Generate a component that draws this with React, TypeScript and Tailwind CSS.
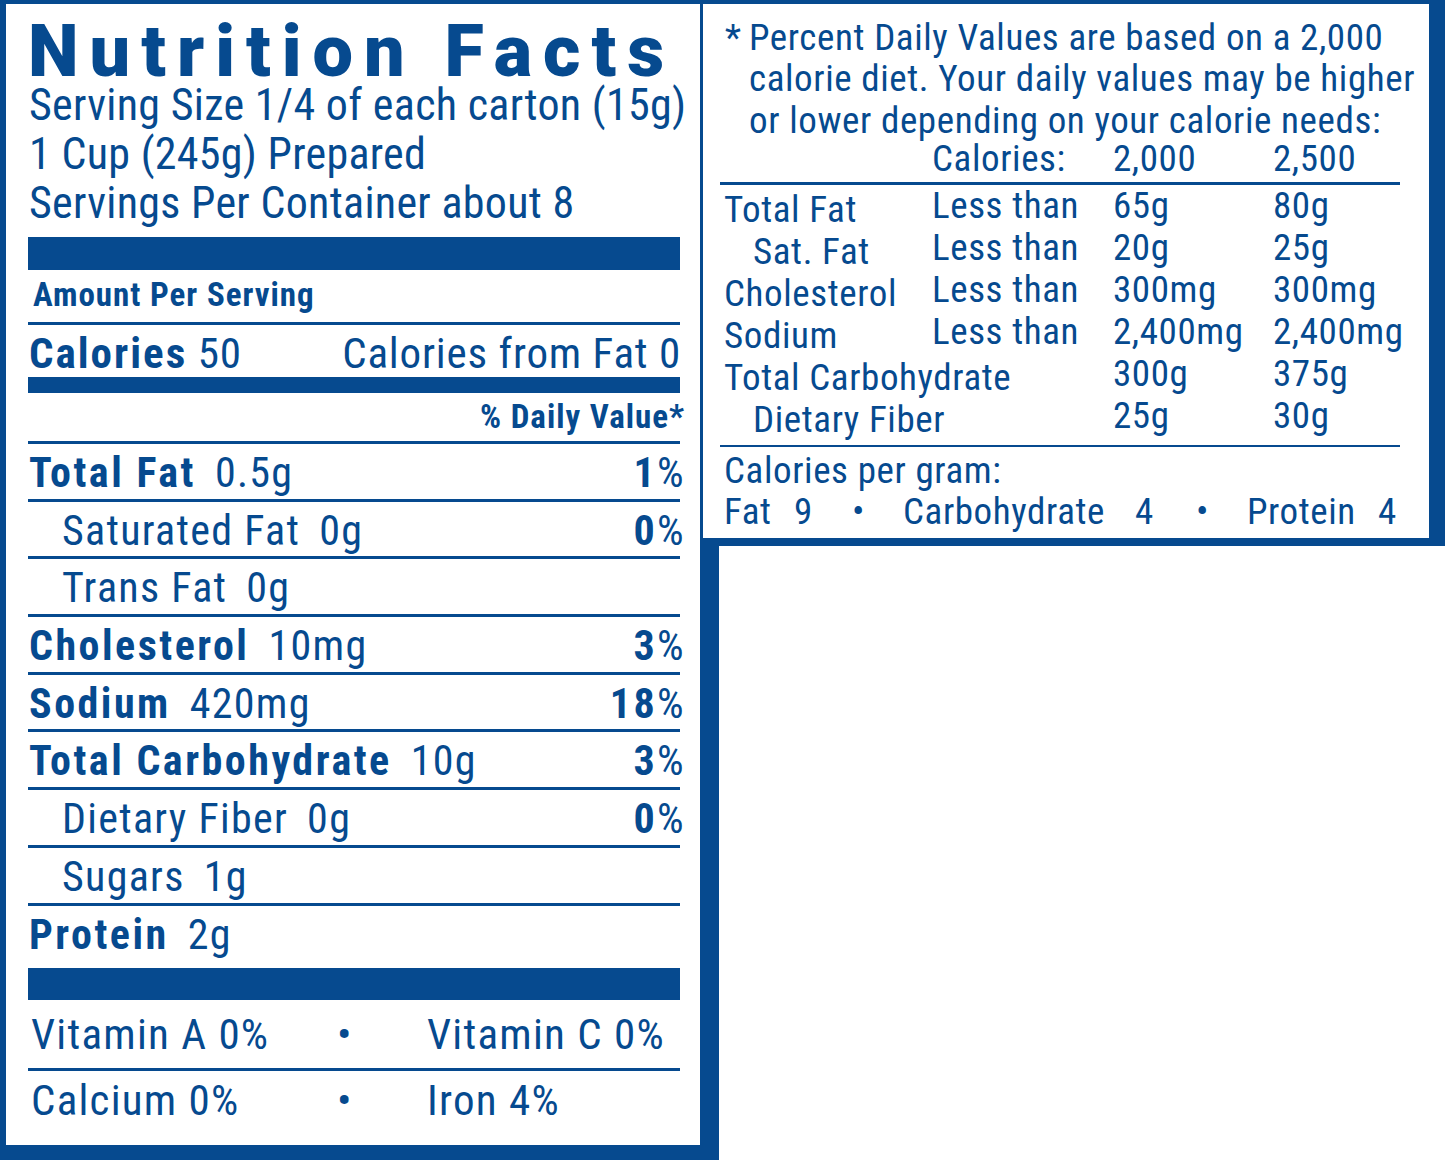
const Line = () => <div className="h-[3px] bg-[#064a8f]" />;

type Row = { name: string; amount: string; dv?: string; bold: boolean; indent?: boolean };

const rows: Row[] = [
  { name: 'Total Fat', amount: '0.5g', dv: '1', bold: true },
  { name: 'Saturated Fat', amount: '0g', dv: '0', bold: false, indent: true },
  { name: 'Trans Fat', amount: '0g', bold: false, indent: true },
  { name: 'Cholesterol', amount: '10mg', dv: '3', bold: true },
  { name: 'Sodium', amount: '420mg', dv: '18', bold: true },
  { name: 'Total Carbohydrate', amount: '10g', dv: '3', bold: true },
  { name: 'Dietary Fiber', amount: '0g', dv: '0', bold: false, indent: true },
  { name: 'Sugars', amount: '1g', bold: false, indent: true },
];

function NutrientRow({ r }: { r: Row }) {
  return (
    <div className="flex h-[54.7px] items-start justify-between whitespace-nowrap pt-[3px] text-[42px] leading-[52px] tracking-[1.3px]">
      <div className={r.indent ? 'pl-[34px]' : 'pl-[1px]'}>
        <span className={r.bold ? 'font-bold tracking-[2.5px]' : ''}>{r.name}</span>
        <span className="ml-[19px]">{r.amount}</span>
      </div>
      {r.dv && (
        <div className="-mr-[5px]">
          <span className="font-bold tracking-[2.5px]">{r.dv}</span>%
        </div>
      )}
    </div>
  );
}

const table = [
  { label: 'Total Fat', sub: false, lt: 'Less than', a: '65g', b: '80g' },
  { label: 'Sat. Fat', sub: true, lt: 'Less than', a: '20g', b: '25g' },
  { label: 'Cholesterol', sub: false, lt: 'Less than', a: '300mg', b: '300mg' },
  { label: 'Sodium', sub: false, lt: 'Less than', a: '2,400mg', b: '2,400mg' },
  { label: 'Total Carbohydrate', sub: false, lt: '', a: '300g', b: '375g' },
  { label: 'Dietary Fiber', sub: true, lt: '', a: '25g', b: '30g' },
];

export default function App() {
  return (
    <div className="flex items-start bg-white text-[#064a8f] font-['Roboto_Condensed','Liberation_Sans',sans-serif]">
      {/* Left panel */}
      <div className="box-border h-[1160px] w-[719px] shrink-0 border-t-[4px] border-l-[6px] border-r-[19px] border-b-[15px] border-[#064a8f] bg-white pl-[22px] pr-[20px] pt-[19px]">
        <div className="h-[58px] whitespace-nowrap font-['Roboto','Liberation_Sans',sans-serif] text-[72px] font-black leading-[58px] tracking-[11px]">
          Nutrition Facts
        </div>
        <div className="whitespace-nowrap pl-[1px] text-[44px] leading-[49px] tracking-[0.3px]">
          <div>Serving Size 1/4 of each carton (15g)</div>
          <div>1 Cup (245g) Prepared</div>
          <div>Servings Per Container about 8</div>
        </div>
        <div className="mt-[9px] h-[33px] bg-[#064a8f]" />
        <div className="h-[49px] pl-[5px] text-[33px] font-bold leading-[49px] tracking-[1px]">Amount Per Serving</div>
        <div className="mt-[3px]">
          <Line />
        </div>
        <div className="flex h-[52px] items-start justify-between whitespace-nowrap pt-[2px] text-[43px] leading-[52px] tracking-[0.8px]">
          <div className="pl-[1px]">
            <span className="font-bold tracking-[2px]">Calories</span> 50
          </div>
          <div className="-mr-[1px]">Calories from Fat 0</div>
        </div>
        <div className="h-[16px] bg-[#064a8f]" />
        <div className="-mr-[5px] h-[48px] text-right text-[33px] font-bold leading-[48px] tracking-[1px]">% Daily Value*</div>
        <Line />
        {rows.map((r) => (
          <div key={r.name}>
            <NutrientRow r={r} />
            <Line />
          </div>
        ))}
        <div className="h-[62px] whitespace-nowrap pl-[1px] pt-[3px] text-[42px] leading-[52px] tracking-[1.3px]">
          <span className="font-bold tracking-[2.5px]">Protein</span>
          <span className="ml-[19px]">2g</span>
        </div>
        <div className="h-[32px] bg-[#064a8f]" />
        <div className="flex h-[68px] whitespace-nowrap pl-[3px] text-[43px] leading-[68px] tracking-[1.25px]">
          <span className="w-[306px]">Vitamin A 0%</span>
          <span className="w-[90px]">•</span>
          <span>Vitamin C 0%</span>
        </div>
        <Line />
        <div className="flex h-[58px] whitespace-nowrap pl-[3px] text-[43px] leading-[58px] tracking-[1.25px]">
          <span className="w-[306px]">Calcium 0%</span>
          <span className="w-[90px]">•</span>
          <span>Iron 4%</span>
        </div>
      </div>

      {/* Right panel */}
      <div className="relative z-10 -ml-[19px] box-border h-[546px] w-[745px] shrink-0 border-t-[4px] border-l-[3px] border-r-[16px] border-b-[8px] border-[#064a8f] bg-white pl-[17px] pr-[29px] pt-[12.6px] text-[37px] tracking-[0.6px]">
        <div className="flex whitespace-nowrap leading-[41.5px]">
          <span className="w-[29px] shrink-0 pl-[5px]">*</span>
          <div>
            <div>Percent Daily Values are based on a 2,000</div>
            <div>calorie diet. Your daily values may be higher</div>
            <div>or lower depending on your calorie needs:</div>
          </div>
        </div>
        <div className="grid h-[36px] grid-cols-[208px_181px_160px_1fr] pl-[4px] leading-[36px]">
          <span />
          <span>Calories:</span>
          <span>2,000</span>
          <span>2,500</span>
        </div>
        <div className="mt-[5px] h-[2.5px] bg-[#064a8f]" />
        <div className="pl-[4px]">
          {table.map((t) => (
            <div key={t.label} className="grid h-[42px] grid-cols-[208px_181px_160px_1fr] whitespace-nowrap leading-[42px]">
              <span className={'translate-y-[4px] ' + (t.sub ? 'pl-[29px]' : '')}>{t.label}</span>
              <span>{t.lt}</span>
              <span>{t.a}</span>
              <span>{t.b}</span>
            </div>
          ))}
        </div>
        <div className="mt-[8px] h-[2.5px] bg-[#064a8f]" />
        <div className="mt-[3px] pl-[4px] leading-[41px]">
          <div>Calories per gram:</div>
          <div className="flex whitespace-nowrap">
            <span className="w-[70px]">Fat</span>
            <span className="w-[58px]">9</span>
            <span className="w-[51px]">•</span>
            <span className="w-[232px]">Carbohydrate</span>
            <span className="w-[61px]">4</span>
            <span className="w-[51px]">•</span>
            <span className="w-[131px]">Protein</span>
            <span>4</span>
          </div>
        </div>
      </div>
    </div>
  );
}
